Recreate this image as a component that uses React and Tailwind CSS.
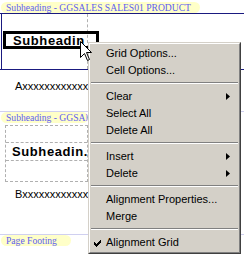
import React from 'react';

const menuItems = [
    { label: "Grid Options..." },
    { label: "Cell Options..." },
    { sep: true },
    { label: "Clear", arrow: true },
    { label: "Select All" },
    { label: "Delete All" },
    { sep: true },
    { label: "Insert", arrow: true },
    { label: "Delete", arrow: true },
    { sep: true },
    { label: "Alignment Properties..." },
    { label: "Merge" },
    { sep: true },
    { label: "Alignment Grid", checked: true },
];

const BandLabel = ({ children, width }) => (
    <div
        className="h-[11px] ml-[1px] rounded-full bg-[#ffffc8] pl-[5px] flex items-center text-[9.6px] leading-none text-[#5e5ef0] whitespace-nowrap overflow-hidden font-['Liberation_Serif',serif]"
        style={{ width }}
    >
        {children}
    </div>
);

const ContextMenu = () => (
    <div className="absolute left-[88px] top-[42px] w-[153px] h-[212px] border border-t-[#d4d0c8] border-l-[#d4d0c8] border-r-[#404040] border-b-[#404040] bg-[#d4d0c8]">
        <div className="h-full border border-t-white border-l-white border-r-[#808080] border-b-[#808080] pt-[1px] font-['Liberation_Sans',sans-serif] text-[11px] text-black">
            {menuItems.map((item, i) =>
                item.sep ? (
                    <div key={i} className="h-[9px] pt-[3px] px-[1px]">
                        <div className="h-[2px] border-t border-t-[#808080] border-b border-b-white" />
                    </div>
                ) : (
                    <div key={i} className="relative h-[17px] flex items-center pl-[16px] leading-none">
                        {item.checked && (
                            <svg className="absolute left-[4px] top-[6px]" width="7" height="7" viewBox="0 0 7 7">
                                <path d="M0 2h1v1h1v1h1V3h1V2h1V1h1V0h1v3H6v1H5v1H4v1H3v1H2V6H1V5H0z" fill="#000" />
                            </svg>
                        )}
                        <span>{item.label}</span>
                        {item.arrow && (
                            <svg className="absolute right-[9px] top-[5px]" width="4" height="7" viewBox="0 0 4 7">
                                <path d="M0 0L4 3.5L0 7z" fill="#000" />
                            </svg>
                        )}
                    </div>
                )
            )}
        </div>
    </div>
);

const Cursor = () => (
    <svg className="absolute left-[80px] top-[41px]" width="13" height="20" viewBox="0 0 13 20">
        <path d="M0.5 0.5V16.5L4.5 12.5L7.5 19.5L9.5 18.5L6.5 11.5H11.5Z" fill="#fff" stroke="#000" strokeWidth="1" strokeLinejoin="miter" />
    </svg>
);

export default function App() {
    return (
        <div className="relative w-[244px] h-[257px] bg-white overflow-hidden font-['Liberation_Sans',sans-serif]">
            {/* Subheading band */}
            <div className="h-[2px]" />
            <BandLabel width={199}>Subheading - GGSALES SALES01 PRODUCT</BandLabel>
            <div className="h-px bg-[#1a1a80]" />
            <div className="ml-[1px] w-[87px] h-[55px] border-l border-l-[#1a1a80] relative">
                <div className="h-full border-r border-dashed border-r-[#b0b0b0] pt-[17px]">
                    <div className="w-[96px] h-[18px] ml-[1px] border-[3px] border-black flex items-center pl-[7px] text-[13px] font-bold tracking-[0.6px] leading-none whitespace-nowrap">
                        Subheadin
                    </div>
                </div>
            </div>
            <div className="h-px bg-[#1a1a80]" />

            <div className="w-[88px] overflow-hidden pl-[15px] pt-[11px] text-[11px] leading-none text-black whitespace-nowrap">
                Axxxxxxxxxxxxxxxxxxxx
            </div>

            {/* second subheading band */}
            <div className="mt-[19px] h-px bg-[#d0d0f0]" />
            <BandLabel width={87}>Subheading - GGSALES SALES01 PRODUCT</BandLabel>
            <div className="h-[2px]" />
            <div className="ml-[5px] w-[83px] border border-dashed border-[#b0b0b0]">
                <div className="h-[17px] border-b border-dashed border-b-[#b0b0b0]" />
                <div className="h-[18px] border-b border-dashed border-b-[#b0b0b0] flex items-center pl-[6px] text-[13px] font-bold tracking-[0.6px] leading-none whitespace-nowrap overflow-hidden">
                    Subheadin...
                </div>
                <div className="h-[20px]" />
            </div>

            <div className="w-[88px] overflow-hidden pl-[15px] pt-[7px] text-[11px] leading-none text-black whitespace-nowrap">
                Bxxxxxxxxxxxxxxxxxxxx
            </div>

            {/* page footing */}
            <div className="mt-[34px] h-px bg-[#d0d0f0]" />
            <BandLabel width={70}>Page Footing</BandLabel>

            <ContextMenu />
            <Cursor />
        </div>
    );
}
